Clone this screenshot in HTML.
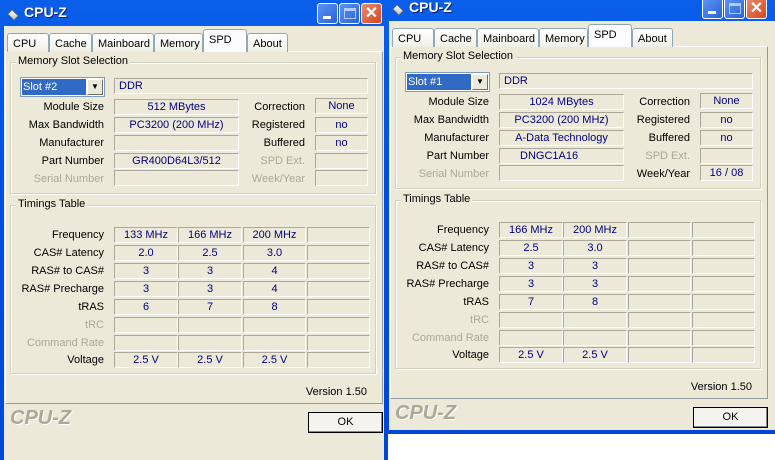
<!DOCTYPE html>
<html><head><meta charset="utf-8"><style>
*{margin:0;padding:0;box-sizing:border-box}
body{width:775px;height:439px;overflow:hidden;background:#fff;font-family:"Liberation Sans",sans-serif;font-size:11px;position:relative}
.win{position:absolute;background:linear-gradient(#0A5FEA,#0050E0 40%,#0046D5);overflow:hidden}
.body{position:absolute;left:4px;right:4px;top:26px;bottom:4px;background:#ECE9D8}
.win>*{position:absolute}
.ttl{left:24px;top:4px;color:#fff;font-weight:bold;font-size:14px;text-shadow:1px 1px #0A1E80}
.ico{left:7px;top:9px;width:12px;height:12px;background:linear-gradient(135deg,#fff,#bbb);transform:rotate(45deg) scale(.8,.55);border:1px solid #666}
.tb{top:3px;width:21px;height:21px;border:1px solid #fff;border-radius:3px;background:linear-gradient(135deg,#5C93F5,#2962D9)}
.tb.c{background:linear-gradient(135deg,#EA8C6D,#D8441C)}
.tab{top:33px;height:19px;background:linear-gradient(#FFFFFF,#F0EFE6);border:1px solid #91A7B4;border-bottom:none;border-radius:3px 3px 0 0;padding:4px 0 0 5px;font-size:11px}
.tab.s{top:29px;height:23px;background:#FCFCFE;padding-top:4px;z-index:2}
.panel{left:5px;top:51px;width:378px;height:353px;background:#ECE9D8;border:1px solid #fff;border-right-color:#919B9C;border-bottom-color:#919B9C}
.grp{border:1px solid #D0D0BF;box-shadow:inset 1px 1px #fff, 1px 1px #fff}
.lg{background:#ECE9D8;padding:0 2px;font-size:11px}
.lb{width:100px;text-align:right;font-size:11px;height:16px;line-height:16px}
.lb2{text-align:right;font-size:11px;height:16px;line-height:16px}
.g{color:#ACA899}
.bx{height:16px;border:1px solid;border-color:#ACA899 #fff #fff #ACA899;color:#000080;text-align:center;line-height:14px;font-size:11px}
.ok{left:308px;width:75px;height:21px;border:1px solid #000;background:#F4F3EE;box-shadow:inset -1px -1px #888;text-align:center;line-height:19px;font-size:11px}
.logo{left:10px;font:bold italic 20px "Liberation Sans",sans-serif;color:#ABA897;text-shadow:1px 1px #fff}
</style></head><body>

<!-- LEFT WINDOW -->
<div class="win" style="left:0;top:0;width:388px;height:460px">
<div class="body" style="bottom:0"></div>
<div class="ico"></div><div class="ttl">CPU-Z</div>
<div class="tb" style="left:317px"><div style="position:absolute;left:5px;top:12px;width:8px;height:3px;background:#fff"></div></div>
<div class="tb" style="left:339px"><div style="position:absolute;left:4px;top:4px;width:12px;height:11px;border:1px solid #fff;border-top-width:3px;opacity:.6"></div></div>
<div class="tb c" style="left:361px;color:#fff;font-weight:bold;font-size:16px;text-align:center;line-height:19px">✕</div>
<div class="panel"></div>
<div class="tab" style="left:7px;width:42px">CPU</div>
<div class="tab" style="left:49px;width:43px">Cache</div>
<div class="tab" style="left:92px;width:62px">Mainboard</div>
<div class="tab" style="left:154px;width:49px">Memory</div>
<div class="tab s" style="left:203px;width:44px">SPD</div>
<div class="tab" style="left:247px;width:41px">About</div>

<div class="grp" style="left:10px;top:62px;width:366px;height:132px"></div>
<div class="lg" style="left:16px;top:55px">Memory Slot Selection</div>
<div style="left:20px;top:77px;width:85px;height:20px;background:#fff;border:1px solid #7F9DB9"></div>
<div style="left:22px;top:79px;width:64px;height:16px;background:#316AC5;color:#fff;line-height:16px;padding-left:1px;font-size:11px">Slot #2</div>
<div style="left:87px;top:79px;width:16px;height:16px;background:#ECE9D8;border:1px solid;border-color:#fff #716F64 #716F64 #fff;font-size:8px;text-align:center;line-height:14px">▼</div>
<div class="bx" style="left:114px;top:78px;width:254px;text-align:left;padding-left:4px">DDR</div>

<div class="lb" style="left:4px;top:99px">Module Size</div><div class="bx" style="left:114px;top:99px;width:125px">512 MBytes</div>
<div class="lb2" style="left:220px;width:85px;top:99px">Correction</div><div class="bx" style="left:315px;top:98px;width:53px">None</div>
<div class="lb" style="left:4px;top:117px">Max Bandwidth</div><div class="bx" style="left:114px;top:117px;width:125px">PC3200 (200 MHz)</div>
<div class="lb2" style="left:220px;width:85px;top:117px">Registered</div><div class="bx" style="left:315px;top:117px;width:53px">no</div>
<div class="lb" style="left:4px;top:135px">Manufacturer</div><div class="bx" style="left:114px;top:135px;width:125px"></div>
<div class="lb2" style="left:220px;width:85px;top:135px">Buffered</div><div class="bx" style="left:315px;top:135px;width:53px">no</div>
<div class="lb" style="left:4px;top:153px">Part Number</div><div class="bx" style="left:114px;top:153px;width:125px">GR400D64L3/512</div>
<div class="lb2 g" style="left:220px;width:85px;top:153px">SPD Ext.</div><div class="bx" style="left:315px;top:153px;width:53px"></div>
<div class="lb g" style="left:4px;top:171px">Serial Number</div><div class="bx" style="left:114px;top:170px;width:125px"></div>
<div class="lb2 g" style="left:220px;width:85px;top:171px">Week/Year</div><div class="bx" style="left:315px;top:170px;width:53px"></div>

<div class="grp" style="left:10px;top:205px;width:366px;height:169px"></div>
<div class="lg" style="left:16px;top:198px">Timings Table</div>
<div class="lb" style="left:4px;top:227px">Frequency</div><div class="bx" style="left:114px;top:227px;width:64px">133 MHz</div><div class="bx" style="left:178px;top:227px;width:64px">166 MHz</div><div class="bx" style="left:243px;top:227px;width:63px">200 MHz</div><div class="bx" style="left:307px;top:227px;width:63px"></div>
<div class="lb" style="left:4px;top:245px">CAS# Latency</div><div class="bx" style="left:114px;top:245px;width:64px">2.0</div><div class="bx" style="left:178px;top:245px;width:64px">2.5</div><div class="bx" style="left:243px;top:245px;width:63px">3.0</div><div class="bx" style="left:307px;top:245px;width:63px"></div>
<div class="lb" style="left:4px;top:263px">RAS# to CAS#</div><div class="bx" style="left:114px;top:263px;width:64px">3</div><div class="bx" style="left:178px;top:263px;width:64px">3</div><div class="bx" style="left:243px;top:263px;width:63px">4</div><div class="bx" style="left:307px;top:263px;width:63px"></div>
<div class="lb" style="left:4px;top:281px">RAS# Precharge</div><div class="bx" style="left:114px;top:281px;width:64px">3</div><div class="bx" style="left:178px;top:281px;width:64px">3</div><div class="bx" style="left:243px;top:281px;width:63px">4</div><div class="bx" style="left:307px;top:281px;width:63px"></div>
<div class="lb" style="left:4px;top:299px">tRAS</div><div class="bx" style="left:114px;top:299px;width:64px">6</div><div class="bx" style="left:178px;top:299px;width:64px">7</div><div class="bx" style="left:243px;top:299px;width:63px">8</div><div class="bx" style="left:307px;top:299px;width:63px"></div>
<div class="lb g" style="left:4px;top:317px">tRC</div><div class="bx" style="left:114px;top:317px;width:64px"></div><div class="bx" style="left:178px;top:317px;width:64px"></div><div class="bx" style="left:243px;top:317px;width:63px"></div><div class="bx" style="left:307px;top:317px;width:63px"></div>
<div class="lb g" style="left:4px;top:335px">Command Rate</div><div class="bx" style="left:114px;top:335px;width:64px"></div><div class="bx" style="left:178px;top:335px;width:64px"></div><div class="bx" style="left:243px;top:335px;width:63px"></div><div class="bx" style="left:307px;top:335px;width:63px"></div>
<div class="lb" style="left:4px;top:352px">Voltage</div><div class="bx" style="left:114px;top:352px;width:64px">2.5 V</div><div class="bx" style="left:178px;top:352px;width:64px">2.5 V</div><div class="bx" style="left:243px;top:352px;width:63px">2.5 V</div><div class="bx" style="left:307px;top:352px;width:63px"></div>
<div style="left:300px;width:67px;top:386px;text-align:right">Version 1.50</div>
<div class="logo" style="top:407px">CPU-Z</div>
<div class="ok" style="top:412px">OK</div>
</div>

<!-- RIGHT WINDOW -->
<div class="win" style="left:385px;top:-5px;width:395px;height:439px">
<div class="body"></div>
<div class="ico"></div><div class="ttl">CPU-Z</div>
<div class="tb" style="left:317px"><div style="position:absolute;left:5px;top:12px;width:8px;height:3px;background:#fff"></div></div>
<div class="tb" style="left:339px"><div style="position:absolute;left:4px;top:4px;width:12px;height:11px;border:1px solid #fff;border-top-width:3px;opacity:.6"></div></div>
<div class="tb c" style="left:361px;color:#fff;font-weight:bold;font-size:16px;text-align:center;line-height:19px">✕</div>
<div class="panel"></div>
<div class="tab" style="left:7px;width:42px">CPU</div>
<div class="tab" style="left:49px;width:43px">Cache</div>
<div class="tab" style="left:92px;width:62px">Mainboard</div>
<div class="tab" style="left:154px;width:49px">Memory</div>
<div class="tab s" style="left:203px;width:44px">SPD</div>
<div class="tab" style="left:247px;width:41px">About</div>

<div class="grp" style="left:10px;top:62px;width:366px;height:132px"></div>
<div class="lg" style="left:16px;top:55px">Memory Slot Selection</div>
<div style="left:20px;top:77px;width:85px;height:20px;background:#fff;border:1px solid #7F9DB9"></div>
<div style="left:22px;top:79px;width:64px;height:16px;background:#316AC5;color:#fff;line-height:16px;padding-left:1px;font-size:11px">Slot #1</div>
<div style="left:87px;top:79px;width:16px;height:16px;background:#ECE9D8;border:1px solid;border-color:#fff #716F64 #716F64 #fff;font-size:8px;text-align:center;line-height:14px">▼</div>
<div class="bx" style="left:114px;top:78px;width:254px;text-align:left;padding-left:4px">DDR</div>

<div class="lb" style="left:4px;top:99px">Module Size</div><div class="bx" style="left:114px;top:99px;width:125px">1024 MBytes</div>
<div class="lb2" style="left:220px;width:85px;top:99px">Correction</div><div class="bx" style="left:315px;top:98px;width:53px">None</div>
<div class="lb" style="left:4px;top:117px">Max Bandwidth</div><div class="bx" style="left:114px;top:117px;width:125px">PC3200 (200 MHz)</div>
<div class="lb2" style="left:220px;width:85px;top:117px">Registered</div><div class="bx" style="left:315px;top:117px;width:53px">no</div>
<div class="lb" style="left:4px;top:135px">Manufacturer</div><div class="bx" style="left:114px;top:135px;width:125px">A-Data Technology</div>
<div class="lb2" style="left:220px;width:85px;top:135px">Buffered</div><div class="bx" style="left:315px;top:135px;width:53px">no</div>
<div class="lb" style="left:4px;top:153px">Part Number</div><div class="bx" style="left:114px;top:153px;width:125px;text-align:left;padding-left:20px">DNGC1A16</div>
<div class="lb2 g" style="left:220px;width:85px;top:153px">SPD Ext.</div><div class="bx" style="left:315px;top:153px;width:53px"></div>
<div class="lb g" style="left:4px;top:171px">Serial Number</div><div class="bx" style="left:114px;top:170px;width:125px"></div>
<div class="lb2" style="left:220px;width:85px;top:171px">Week/Year</div><div class="bx" style="left:315px;top:170px;width:53px">16 / 08</div>

<div class="grp" style="left:10px;top:205px;width:366px;height:169px"></div>
<div class="lg" style="left:16px;top:198px">Timings Table</div>
<div class="lb" style="left:4px;top:227px">Frequency</div><div class="bx" style="left:114px;top:227px;width:64px">166 MHz</div><div class="bx" style="left:178px;top:227px;width:64px">200 MHz</div><div class="bx" style="left:243px;top:227px;width:63px"></div><div class="bx" style="left:307px;top:227px;width:63px"></div>
<div class="lb" style="left:4px;top:245px">CAS# Latency</div><div class="bx" style="left:114px;top:245px;width:64px">2.5</div><div class="bx" style="left:178px;top:245px;width:64px">3.0</div><div class="bx" style="left:243px;top:245px;width:63px"></div><div class="bx" style="left:307px;top:245px;width:63px"></div>
<div class="lb" style="left:4px;top:263px">RAS# to CAS#</div><div class="bx" style="left:114px;top:263px;width:64px">3</div><div class="bx" style="left:178px;top:263px;width:64px">3</div><div class="bx" style="left:243px;top:263px;width:63px"></div><div class="bx" style="left:307px;top:263px;width:63px"></div>
<div class="lb" style="left:4px;top:281px">RAS# Precharge</div><div class="bx" style="left:114px;top:281px;width:64px">3</div><div class="bx" style="left:178px;top:281px;width:64px">3</div><div class="bx" style="left:243px;top:281px;width:63px"></div><div class="bx" style="left:307px;top:281px;width:63px"></div>
<div class="lb" style="left:4px;top:299px">tRAS</div><div class="bx" style="left:114px;top:299px;width:64px">7</div><div class="bx" style="left:178px;top:299px;width:64px">8</div><div class="bx" style="left:243px;top:299px;width:63px"></div><div class="bx" style="left:307px;top:299px;width:63px"></div>
<div class="lb g" style="left:4px;top:317px">tRC</div><div class="bx" style="left:114px;top:317px;width:64px"></div><div class="bx" style="left:178px;top:317px;width:64px"></div><div class="bx" style="left:243px;top:317px;width:63px"></div><div class="bx" style="left:307px;top:317px;width:63px"></div>
<div class="lb g" style="left:4px;top:335px">Command Rate</div><div class="bx" style="left:114px;top:335px;width:64px"></div><div class="bx" style="left:178px;top:335px;width:64px"></div><div class="bx" style="left:243px;top:335px;width:63px"></div><div class="bx" style="left:307px;top:335px;width:63px"></div>
<div class="lb" style="left:4px;top:352px">Voltage</div><div class="bx" style="left:114px;top:352px;width:64px">2.5 V</div><div class="bx" style="left:178px;top:352px;width:64px">2.5 V</div><div class="bx" style="left:243px;top:352px;width:63px"></div><div class="bx" style="left:307px;top:352px;width:63px"></div>
<div style="left:300px;width:67px;top:386px;text-align:right">Version 1.50</div>
<div class="logo" style="top:407px">CPU-Z</div>
<div class="ok" style="top:412px">OK</div>
</div>
</body></html>
